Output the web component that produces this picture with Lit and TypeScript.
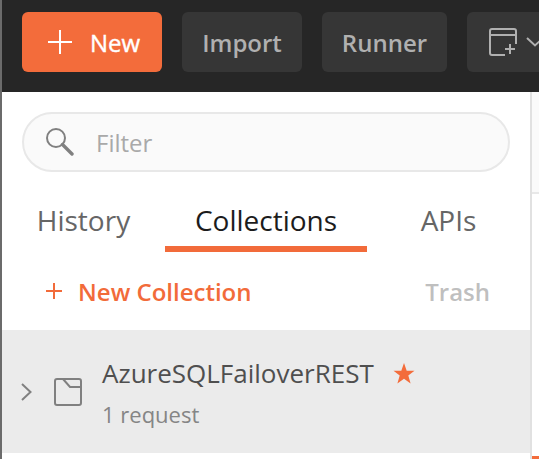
import { LitElement, html, css, svg } from "lit";
import { customElement } from "lit/decorators.js";

const plus = (size: number, width: number) => html`
  <svg width=${size} height=${size} viewBox="0 0 ${size} ${size}" fill="none" stroke="currentColor" stroke-width=${width}>
    ${svg`<path d="M${size / 2} 0V${size}M0 ${size / 2}H${size}" />`}
  </svg>`;

@customElement("app-header")
class AppHeader extends LitElement {
  static styles = css`
    :host { display: flex; gap: 20px; padding: 12px 0 20px 20px; height: 60px; background: #262626; overflow: hidden; }
    .btn {
      box-sizing: border-box; flex: none; height: 60px; border-radius: 6px; background: #363636; color: #b0b0b0;
      display: flex; align-items: center; justify-content: center; font-size: 24px; font-weight: 600; line-height: 60px; padding-top: 2px;
    }
    .new { width: 140px; background: #f36c3b; color: #fff; justify-content: flex-start; padding-left: 26px; gap: 18px; }
    .new span { font-weight: 400; -webkit-text-stroke: 0.4px #fff; }
    .new svg { margin-top: -2px; }
    .import { width: 120px; }
    .runner { width: 125px; }
    .window { width: 110px; justify-content: flex-start; padding: 0 0 0 22px; gap: 9px; }
    svg { display: block; flex: none; }
  `;
  render() {
    return html`
      <div class="btn new">${plus(24, 2)}<span>New</span></div>
      <div class="btn import">Import</div>
      <div class="btn runner">Runner</div>
      <div class="btn window">
        <svg width="28" height="28" viewBox="0 0 28 28" fill="none" stroke="#b0b0b0" stroke-width="2">
          <path d="M16 27H3Q1 27 1 25V3Q1 1 3 1H25Q27 1 27 3V16M1 7H27M21 16V26M16 21H26" />
        </svg>
        <svg width="18" height="10" viewBox="0 0 18 10" fill="none" stroke="#b0b0b0" stroke-width="2">
          <path d="M1 1L9 8.5L17 1" />
        </svg>
      </div>`;
  }
}

@customElement("app-sidebar")
class AppSidebar extends LitElement {
  static styles = css`
    :host { display: block; box-sizing: border-box; width: 530px; height: 367px; background: #fff; border-right: 2px solid #e1e1e1; overflow: hidden; }
    svg { display: block; flex: none; }
    .filter {
      box-sizing: border-box; margin: 20px 20px 0; height: 60px; border: 2px solid #e8e8e8; border-radius: 30px; background: #fafafa;
      display: flex; align-items: center; gap: 22px; padding-left: 22px; font-size: 24px; color: #a9a9a9;
    }
    .tabs { display: flex; height: 60px; margin-top: 20px; font-size: 28px; color: #666; }
    .tab { box-sizing: border-box; width: 202px; flex: none; text-align: center; height: 60px; line-height: 56px; }
    .history { width: 163px; }
    .apis { width: 163px; }
    .active { color: #1c1c1c; border-bottom: 6px solid #f26b3a; }
    .actions { display: flex; justify-content: space-between; height: 78px; padding: 0 40px 0 44px; align-items: center; font-size: 24px; font-weight: 600; }
    .create { display: flex; align-items: center; gap: 16px; color: #f26b3a; }
    .trash { color: #bfbfbf; }
    .item { display: flex; height: 123px; background: #ebebeb; align-items: center; padding-left: 19px; }
    .arrow { margin-right: 22px; }
    .folder { margin-right: 20px; }
    .text { padding-top: 5px; }
    .name { display: flex; align-items: center; gap: 19px; font-size: 26px; line-height: 40px; color: #4f4f4f; }
    .count { font-size: 22px; line-height: 42px; color: #858585; }
  `;
  render() {
    return html`
      <div class="filter">
        <svg width="28" height="28" viewBox="0 0 28 28" fill="none" stroke="#808080">
          <circle cx="10" cy="10" r="9" stroke-width="2" />
          <path d="M16.5 16.5L26 26" stroke-width="3.4" stroke-linecap="round" />
        </svg>
        <span>Filter</span>
      </div>
      <div class="tabs">
        <div class="tab history">History</div>
        <div class="tab active">Collections</div>
        <div class="tab apis">APIs</div>
      </div>
      <div class="actions">
        <div class="create">${plus(16, 2)}<span>New Collection</span></div>
        <div class="trash">Trash</div>
      </div>
      <div class="item">
        <svg class="arrow" width="11" height="18" viewBox="0 0 11 18" fill="none" stroke="#808080" stroke-width="2"><path d="M1 1L9.5 9L1 17" /></svg>
        <svg class="folder" width="28" height="28" viewBox="0 0 28 28" fill="none" stroke="#808080" stroke-width="2">
          <rect x="1" y="1" width="26" height="26" rx="2" /><path d="M9 1L16 9H27" />
        </svg>
        <div class="text">
          <div class="name">
            <span>AzureSQLFailoverREST</span>
            <svg width="22" height="21" viewBox="0 0 22 21" fill="#f36c3b"><path d="M11 0L13.7 7.7H21.5L15.3 12.6L17.6 20.5L11 15.8L4.4 20.5L6.7 12.6L.5 7.7H8.3Z" /></svg>
          </div>
          <div class="count">1 request</div>
        </div>
      </div>`;
  }
}

@customElement("app-root")
class AppRoot extends LitElement {
  static styles = css`
    :host {
      display: block; box-sizing: border-box; width: 539px; height: 459px; overflow: hidden; padding-left: 2px; background: #6b6b6b;
      font-family: "Open Sans", "Noto Sans", sans-serif; white-space: nowrap;
    }
    .body { display: flex; height: 367px; }
    .main { flex: 1; display: flex; flex-direction: column; background: #fff; }
    .strip { height: 100px; background: #fafafa; border-bottom: 2px solid #e8e8e8; }
    .marker { height: 3px; margin-top: auto; background: #f36c3b; }
  `;
  render() {
    return html`
      <app-header></app-header>
      <div class="body">
        <app-sidebar></app-sidebar>
        <div class="main"><div class="strip"></div><div class="marker"></div></div>
      </div>`;
  }
}
